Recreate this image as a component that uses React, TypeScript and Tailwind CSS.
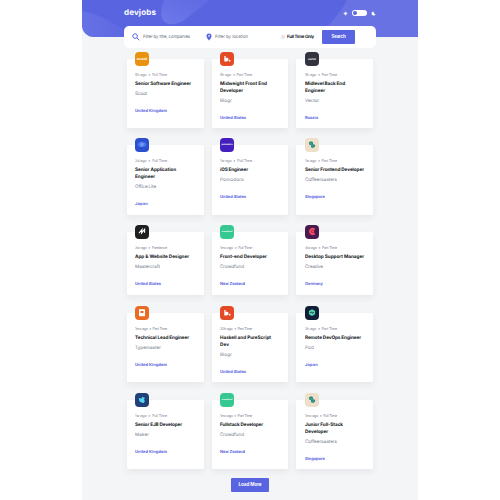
import React from 'react';

type Job = {
  logo: string;
  color: string;
  meta: string;
  title: string[];
  w: number[];
  company: string;
  cw: number;
  place: string;
  pw: number;
};

const rows: { height: string; pad: string; jobs: Job[] }[] = [
  {
    height: 'h-[69px]', pad: 'mt-[11px]',
    jobs: [
      { logo: 'scoot', color: '#e99210', meta: '5h ago  •  Full Time', title: ['Senior Software Engineer'], w: [56], company: 'Scoot', cw: 12, place: 'United Kingdom', pw: 32 },
      { logo: 'blogr', color: '#e44a25', meta: '5h ago  •  Part Time', title: ['Midweight Front End', 'Developer'], w: [47, 23], company: 'Blogr', cw: 12, place: 'United States', pw: 26 },
      { logo: 'vector', color: '#33323f', meta: '5h ago  •  Part Time', title: ['Midlevel Back End', 'Engineer'], w: [40, 20], company: 'Vector', cw: 14, place: 'Russia', pw: 13 },
    ],
  },
  {
    height: 'h-[70px]', pad: 'mt-[17px]',
    jobs: [
      { logo: 'office', color: '#2b50cf', meta: '2d ago  •  Full Time', title: ['Senior Application', 'Engineer'], w: [41, 20], company: 'Office Lite', cw: 21, place: 'Japan', pw: 13 },
      { logo: 'pomodoro', color: '#4320bd', meta: '1w ago  •  Full Time', title: ['iOS Engineer'], w: [28], company: 'Pomodoro', cw: 24, place: 'United States', pw: 26 },
      { logo: 'coffee', color: '#eedfcb', meta: '1w ago  •  Part Time', title: ['Senior Frontend Developer'], w: [59], company: 'Coffeeroasters', cw: 32, place: 'Singapore', pw: 20 },
    ],
  },
  {
    height: 'h-[63px]', pad: 'mt-[17px]',
    jobs: [
      { logo: 'master', color: '#1f1f21', meta: '2w ago  •  Freelance', title: ['App & Website Designer'], w: [54], company: 'Mastercraft', cw: 25, place: 'United States', pw: 26 },
      { logo: 'crowd', color: '#36c891', meta: '1mo ago  •  Full Time', title: ['Front-end Developer'], w: [47], company: 'Crowdfund', cw: 24, place: 'New Zealand', pw: 25 },
      { logo: 'creative', color: '#471b4d', meta: '4w ago  •  Part Time', title: ['Desktop Support Manager'], w: [59], company: 'Creative', cw: 18, place: 'Germany', pw: 18 },
    ],
  },
  {
    height: 'h-[69px]', pad: 'mt-[18px]',
    jobs: [
      { logo: 'type', color: '#ea6b23', meta: '1mo ago  •  Part Time', title: ['Technical Lead Engineer'], w: [54], company: 'Typemaster', cw: 26, place: 'United Kingdom', pw: 32 },
      { logo: 'blogr', color: '#e44a25', meta: '20h ago  •  Part Time', title: ['Haskell and PureScript', 'Dev'], w: [51, 9], company: 'Blogr', cw: 12, place: 'United States', pw: 26 },
      { logo: 'pod', color: '#101e37', meta: '2h ago  •  Part Time', title: ['Remote DevOps Engineer'], w: [56], company: 'Pod', cw: 9, place: 'Japan', pw: 13 },
    ],
  },
  {
    height: 'h-[69px]', pad: 'mt-[18px]',
    jobs: [
      { logo: 'maker', color: '#213f78', meta: '1w ago  •  Full Time', title: ['Senior EJB Developer'], w: [47], company: 'Maker', cw: 14, place: 'United Kingdom', pw: 32 },
      { logo: 'crowd', color: '#36c891', meta: '1mo ago  •  Part Time', title: ['Fullstack Developer'], w: [43], company: 'Crowdfund', cw: 24, place: 'New Zealand', pw: 25 },
      { logo: 'coffee', color: '#eedfcb', meta: '1mo ago  •  Full Time', title: ['Junior Full-Stack', 'Developer'], w: [38, 23], company: 'Coffeeroasters', cw: 32, place: 'Singapore', pw: 20 },
    ],
  },
];

/* One line of text set to a fixed measure. */
function Fit({ children, width }: { children: string; width: number }) {
  const ref = React.useRef<HTMLSpanElement>(null);
  const [gap, setGap] = React.useState(0);
  React.useLayoutEffect(() => {
    if (ref.current) {
      const natural = ref.current.getBoundingClientRect().width;
      setGap((width - natural) / children.length);
    }
  }, [children, width]);
  return (
    <span ref={ref} className="inline-block whitespace-pre" style={{ letterSpacing: gap }}>
      {children}
    </span>
  );
}

function Mark({ name }: { name: string }) {
  switch (name) {
    case 'scoot':
      return <span className="text-[3.8px] font-bold leading-none text-white">scoot</span>;
    case 'vector':
      return <span className="text-[2.6px] font-bold leading-none text-white">vector</span>;
    case 'pomodoro':
      return <span className="text-[2.2px] font-bold leading-none text-white">pomodoro</span>;
    case 'crowd':
      return <span className="text-[2px] font-bold leading-none text-white">crowdfund</span>;
    case 'blogr':
      return (
        <svg viewBox="0 0 14 14" className="size-3.5" fill="#fff">
          <path d="M4.300 4h1.300v1.900C7.400 5.500 8.500 6.200 8.500 7.500S7.500 9.500 6.200 9.500H4.300z" />
          <circle cx="9.600" cy="8.700" r=".9" />
        </svg>
      );
    case 'office':
      return (
        <svg viewBox="0 0 14 14" className="size-3.5">
          <ellipse cx="7" cy="6.5" rx="4.3" ry="2.8" fill="#4975e8" />
          <circle cx="7" cy="6.5" r="1.9" fill="#6e95f7" />
        </svg>
      );
    case 'coffee':
      return (
        <svg viewBox="0 0 14 14" className="size-3.5" fill="#16857b">
          <ellipse cx="6" cy="5.2" rx="2.1" ry="1.7" transform="rotate(-15 6 5.2)" />
          <ellipse cx="8" cy="8" rx="2.1" ry="1.7" transform="rotate(-15 8 8)" />
          <path d="M4.600 5.800 7 5.100M6.800 8.500l2.400-.8" stroke="#a9d4c5" strokeWidth=".4" />
        </svg>
      );
    case 'master':
      return (
        <svg viewBox="0 0 14 14" className="size-3.5" fill="none" stroke="#fff" strokeWidth="1.1">
          <path d="m4 8.2 3-3.7-.4 3.500 3-3.700v3.500" />
        </svg>
      );
    case 'creative':
      return (
        <svg viewBox="0 0 14 14" className="size-3.5" fill="none" stroke="#f34962" strokeWidth="2">
          <path d="M9.600 4.600A2.800 2.500 0 1 0 9.600 8.400M6.500 6.400h2.600" />
        </svg>
      );
    case 'type':
      return (
        <svg viewBox="0 0 14 14" className="size-3.5">
          <rect x="4" y="3.2" width="6" height="7" rx=".5" fill="#fff" />
          <path d="M5.400 5h3.100v2H5.400z" fill="#ea6b23" />
        </svg>
      );
    case 'pod':
      return (
        <svg viewBox="0 0 14 14" className="size-3.5">
          <path d="m7 3.200 3.100 1.700v3.300L7 10 3.900 8.200V4.900z" fill="#53d8b2" />
          <path d="M4.900 6.700h1l.7-.9.8 1.500.7-.6h1" fill="none" stroke="#101e37" strokeWidth=".8" />
        </svg>
      );
    default:
      return (
        <svg viewBox="0 0 14 14" className="size-3.5" fill="#55d6ee">
          <path d="m3.800 5 3 .6.2-1.900 3 1.300L8.800 7l1.300 1-1.800 2.200-3.800-1.800z" />
        </svg>
      );
  }
}

function Card({ job, last }: { job: Job; last: boolean }) {
  return (
    <article
      className={`relative h-full rounded-[1px] bg-white pr-1 pt-[13px] shadow-[0_3px_6px_rgba(50,60,80,0.07)] ${last ? 'pl-[9px]' : 'pl-2'}`}
    >
      <div
        className={`absolute -top-[7px] flex size-3.5 items-center justify-center rounded-[4px] ${last ? 'left-[9px]' : 'left-2'}`}
        style={{ backgroundColor: job.color }}
      >
        <Mark name={job.logo} />
      </div>
      <p className="h-[8.500px] whitespace-nowrap text-[3.7px] leading-[6px] text-[#7d8595]">
        <Fit width={32}>{job.meta}</Fit>
      </p>
      <h2 className="text-[4.7px] font-bold leading-[7px] text-[#121721]">
        {job.title.map((line, i) => (
          <span key={line} className="block h-[7px] whitespace-nowrap">
            <Fit width={job.w[i]}>{line}</Fit>
          </span>
        ))}
      </h2>
      <p className="mt-[3px] h-[7px] whitespace-nowrap text-[4.6px] leading-[7px] text-[#6e7888]">
        <Fit width={job.cw}>{job.company}</Fit>
      </p>
      <p className="mt-[9.500px] h-[7px] whitespace-nowrap text-[4px] font-bold leading-[7px] text-[#5964e0]">
        <Fit width={job.pw}>{job.place}</Fit>
      </p>
    </article>
  );
}

export default function App() {
  return (
    <div className="h-[500px] w-[500px] overflow-hidden bg-white font-['Inter',sans-serif] [text-rendering:geometricPrecision]">
      <main className="ml-[82px] flex h-[500px] w-[336px] flex-col bg-[#f4f5f6]">
        <header className="relative h-[37px] shrink-0 overflow-hidden rounded-bl-[12px] bg-[#5964e0] px-[42px]">
          <svg className="absolute inset-0" width="336" height="37" viewBox="0 0 336 37">
            <defs>
              <linearGradient id="arc" x1="0" y1="1" x2="1" y2="0">
                <stop stopColor="#7d88f2" stopOpacity=".6" />
                <stop offset="1" stopColor="#6a75e8" stopOpacity=".35" />
              </linearGradient>
              <linearGradient id="edge" x1="0" y1="0" x2="1" y2="0">
                <stop stopColor="#6b76e7" stopOpacity=".75" />
                <stop offset="1" stopColor="#6b76e7" stopOpacity=".15" />
              </linearGradient>
            </defs>
            <path d="M0 11Q26 16 50 37H0z" fill="url(#edge)" />
            <path d="M82 0h46L101 21q-7 4-14 3-7-2-8-9 0-8 3-15z" fill="url(#arc)" />
            <path d="M265 0q-7 13-19 26v11h90V0z" fill="#6872e3" />
          </svg>
          <div className="relative flex items-start justify-between">
            <h1 className="pt-2 text-[8px] font-bold leading-[9px] text-white">
              <Fit width={32}>devjobs</Fit>
            </h1>
            <div className="flex items-center gap-1 pt-[10px]">
              <svg width="5" height="5" viewBox="0 0 5 5" fill="#fff">
                <circle cx="2.5" cy="2.5" r="1.3" />
                <path d="M2.5.3v4.4M.3 2.500h4.400" stroke="#fff" strokeWidth=".4" />
              </svg>
              <div className="flex h-[6px] w-[15px] items-center rounded-full bg-white px-[1px]">
                <div className="size-1 rounded-full bg-[#5964e0]" />
              </div>
              <svg width="5" height="5" viewBox="0 0 5 5" fill="#fff">
                <path d="M2.700.6A2 2 0 1 0 4.500 3 2 2 0 0 1 2.700.6" />
              </svg>
            </div>
          </div>
        </header>

        <section className="relative z-10 -mt-[11px] ml-[42px] flex h-[22px] w-[252px] shrink-0 items-center rounded-[5px] bg-white text-[4.4px] leading-[7px]">
          <svg className="ml-2" width="8" height="8" viewBox="0 0 8 8" fill="none" stroke="#5964e0" strokeWidth="1">
            <circle cx="3.1" cy="3.1" r="2.3" />
            <path d="m4.900 4.900 2.400 2.400" />
          </svg>
          <div className="ml-[3px] w-[63px] whitespace-nowrap text-[#6f7683]">
            <Fit width={47}>Filter by title, companies</Fit>
          </div>
          <svg width="6" height="8" viewBox="0 0 6 8">
            <path d="M3 .5A2.500 2.500 0 0 0 .5 3.100C.5 5 3 7.600 3 7.600S5.500 5 5.500 3.100A2.500 2.500 0 0 0 3 .5z" fill="#5964e0" />
            <circle cx="3" cy="2.9" r=".8" fill="#fff" />
          </svg>
          <div className="ml-[3px] w-[66px] whitespace-nowrap text-[#6f7683]">
            <Fit width={33}>Filter by location</Fit>
          </div>
          <div className="size-[4px] rounded-[1px] bg-[#e7e8ec]" />
          <div className="ml-[2px] w-[35px] whitespace-nowrap font-bold text-[#121721]">
            <Fit width={27}>Full Time Only</Fit>
          </div>
          <button className="h-[14px] w-[33px] rounded-[1px] bg-[#5964e0] font-bold leading-[14px] text-white">
            <Fit width={14}>Search</Fit>
          </button>
        </section>

        <div className="ml-[45px] w-[246px] shrink-0">
          {rows.map((row, i) => (
            <div key={i} className={`grid grid-cols-[77px_76px_77px] gap-x-[8px] ${row.height} ${row.pad}`}>
              {row.jobs.map((job, j) => (
                <Card key={job.title[0]} job={job} last={j === 2} />
              ))}
            </div>
          ))}
        </div>
        <button className="ml-[149px] mt-[9px] h-[14px] w-[38px] shrink-0 rounded-[1px] bg-[#5964e0] text-[4.6px] font-bold leading-[14px] text-white">
          <Fit width={23}>Load More</Fit>
        </button>
      </main>
    </div>
  );
}
